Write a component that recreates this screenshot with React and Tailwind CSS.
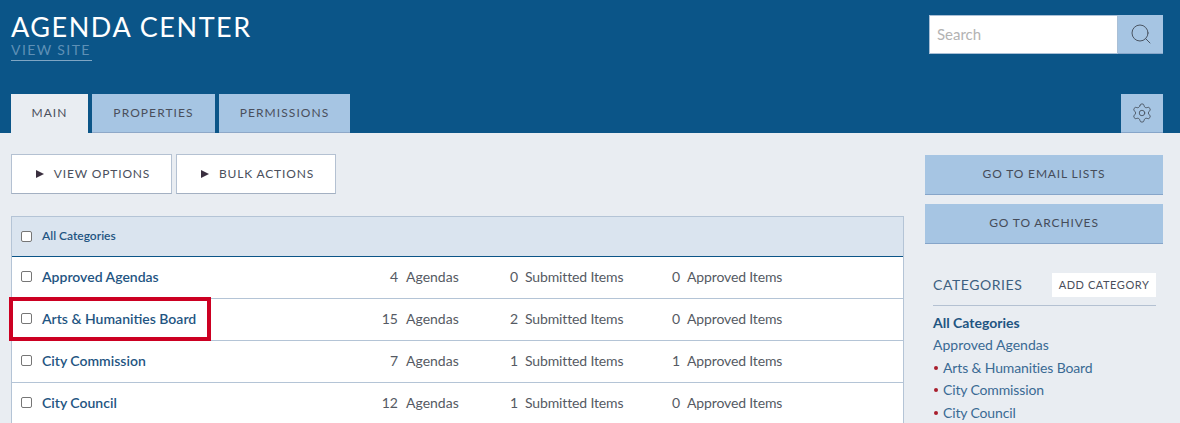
import React from "react";
import { Search, Settings } from "lucide-react";

const ROWS = [
  { name: "Approved Agendas", agendas: 4, submitted: 0, approved: 0 },
  { name: "Arts & Humanities Board", agendas: 15, submitted: 2, approved: 0 },
  { name: "City Commission", agendas: 7, submitted: 1, approved: 1 },
  { name: "City Council", agendas: 12, submitted: 1, approved: 0 },
];

const SUB_CATEGORIES = ["Arts & Humanities Board", "City Commission", "City Council"];

const Checkbox = () => (
  <span className="block h-[11px] w-[11px] rounded-[2px] border border-[#767676] bg-white" />
);

const Tab = ({ label, active, width }) => (
  <div
    className={`flex h-[39px] items-center justify-center border-b text-[12px] tracking-[0.09em] text-[#4a4f5c] ${width} ${
      active ? "border-[#e9edf2] bg-[#e9edf2]" : "border-[#8ea8c8] bg-[#a6c5e3]"
    }`}
  >
    {label}
  </div>
);

const OptionButton = ({ label, width }) => (
  <button className={`flex h-[40px] items-center justify-center gap-[10px] border border-[#b4c1d2] border-b-[#a3b0c2] bg-white pl-[3px] text-[12px] tracking-[0.07em] text-[#4a4f5c] ${width}`}>
    <span className="h-0 w-0 border-y-[4px] border-l-[8px] border-y-transparent border-l-[#3a2f3f]" />
    {label}
  </button>
);

const SideButton = ({ label }) => (
  <button className="h-[40px] w-full border-b border-[#86a5c9] bg-[#a6c5e3] pb-[2px] text-[12px] tracking-[0.07em] text-[#454c59]">
    {label}
  </button>
);

const CategoryRow = ({ row, highlighted }) => (
  <div className="relative grid h-[42px] grid-cols-[30px_300px_56px_82px_38px_123px_39px_1fr] items-center border-b border-[#b4c4d6] bg-white pb-[3px] text-[14px] text-[#555a63]">
    <span className="pl-[9px]">
      <Checkbox />
    </span>
    <span className="font-semibold text-[#1f5582]">{row.name}</span>
    <span className="text-right">{row.agendas}</span>
    <span className="pl-[8px]">Agendas</span>
    <span className="text-right">{row.submitted}</span>
    <span className="pl-[7px] tracking-[-0.01em]">Submitted Items</span>
    <span className="text-right">{row.approved}</span>
    <span className="pl-[7px] tracking-[-0.01em]">Approved Items</span>
    {highlighted && (
      <div className="absolute left-[-3px] top-[-2px] h-[44px] w-[202px] border-4 border-[#cc0022]" />
    )}
  </div>
);

export default function App() {
  return (
    <div className="h-[423px] w-[1180px] overflow-hidden bg-[#e9edf2] font-['Lato',sans-serif]">
      <header className="flex h-[133px] justify-between bg-[#0b5588] pl-[11px] pr-[17px]">
        <div className="flex flex-col justify-between">
          <div className="pt-[11px]">
            <h1 className="text-[27px] leading-[32px] tracking-[0.057em] text-white">AGENDA CENTER</h1>
            <a className="block w-[81px] border-b border-[#7fa6c4] pb-[3px] text-[14px] leading-[14px] tracking-[0.1em] text-[#5e90b6]">
              VIEW SITE
            </a>
          </div>
          <nav className="flex gap-[4px]">
            <Tab label="MAIN" active width="w-[77px]" />
            <Tab label="PROPERTIES" width="w-[123px]" />
            <Tab label="PERMISSIONS" width="w-[131px]" />
          </nav>
        </div>
        <div className="flex flex-col items-end justify-between pt-[15px]">
          <div className="flex h-[39px] w-[234px]">
            <input
              placeholder="Search"
              className="h-full w-[189px] border border-[#a9bfd6] bg-white pb-[2px] pl-[7px] text-[15px] placeholder:text-[#b3b3b3]"
            />
            <button className="flex h-full w-[45px] items-center justify-center border-b border-[#86a5c9] bg-[#a6c5e3]">
              <Search size={24} strokeWidth={1} className="text-[#4a5563]" />
            </button>
          </div>
          <button className="flex h-[39px] w-[42px] items-center justify-center border-b border-[#86a5c9] bg-[#a6c5e3]">
            <Settings size={22} strokeWidth={1} className="text-[#4a5563]" />
          </button>
        </div>
      </header>

      <main className="flex gap-[21px] pl-[11px] pt-[21px]">
        <section className="w-[893px]">
          <div className="flex gap-[4px]">
            <OptionButton label="VIEW OPTIONS" width="w-[161px]" />
            <OptionButton label="BULK ACTIONS" width="w-[160px]" />
          </div>
          <div className="mt-[22px] border-x border-t border-[#b4c4d6]">
            <div className="flex h-[40px] items-center border-b border-[#0b5588] bg-[#dae4ef] pb-[1px] pl-[9px] text-[12px] font-semibold text-[#1f5582]">
              <Checkbox />
              <span className="mb-[1px] ml-[10px]">All Categories</span>
            </div>
            {ROWS.map((row) => (
              <CategoryRow key={row.name} row={row} highlighted={row.name === "Arts & Humanities Board"} />
            ))}
          </div>
        </section>

        <aside className="w-[238px] pt-[1px]">
          <div className="flex flex-col gap-[9px]">
            <SideButton label="GO TO EMAIL LISTS" />
            <SideButton label="GO TO ARCHIVES" />
          </div>
          <div className="pl-[8px] pr-[7px] pt-[29px]">
            <div className="flex items-center justify-between border-b border-[#b4c1d2] pb-[8px]">
              <h2 className="pb-[2px] text-[14px] tracking-[0.04em] text-[#3d5f80]">CATEGORIES</h2>
              <button className="h-[24px] w-[104px] bg-white text-[11px] tracking-[0.05em] text-[#4a4f5c]">
                ADD CATEGORY
              </button>
            </div>
            <ul className="pt-[6px] text-[14px] leading-[22.4px] text-[#3a6a94]">
              <li className="font-bold text-[#1f5582]">All Categories</li>
              <li>Approved Agendas</li>
              {SUB_CATEGORIES.map((name) => (
                <li key={name} className="flex items-center gap-[5px] pl-[1px] tracking-[-0.01em]">
                  <span className="h-[4px] w-[4px] rounded-full bg-[#a81e2d]" />
                  {name}
                </li>
              ))}
            </ul>
          </div>
        </aside>
      </main>
    </div>
  );
}
